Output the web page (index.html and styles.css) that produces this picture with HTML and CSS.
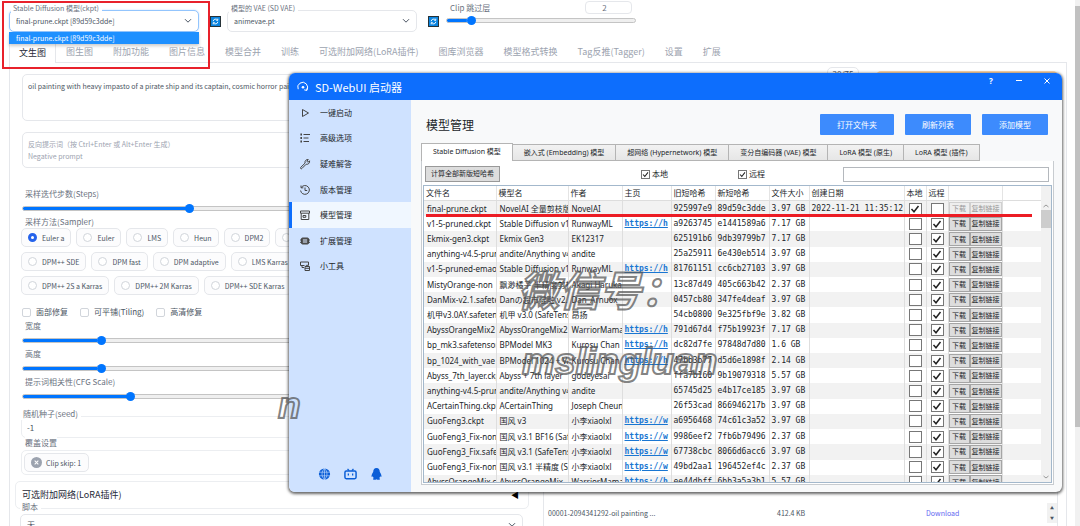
FILE: index.html
```html
<!DOCTYPE html>
<html lang="zh-CN">
<head>
<meta charset="utf-8">
<title>Stable Diffusion</title>
<link rel="stylesheet" href="styles.css">
</head>
<body>
<div class="page">
  <header class="topbar">
    <div class="field field-model">
      <label for="ckpt">Stable Diffusion 模型(ckpt)</label>
      <div class="select-box focused">
        <select id="ckpt"><option>final-prune.ckpt [89d59c3dde]</option></select>
        <svg class="chevron" viewBox="0 0 8 6"><path d="M1 1.2l3 3 3-3"/></svg>
      </div>
      <ul class="options"><li>final-prune.ckpt [89d59c3dde]</li></ul>
    </div>
    <button class="refresh" aria-label="刷新模型"><svg viewBox="0 0 11 11"><rect width="11" height="11" fill="#263238"/><rect x="1" y="1" width="9" height="9" fill="#0a84e0"/><path d="M3.2 5.2a2.4 2.4 0 0 1 4.3-1.2M7.8 5.8a2.4 2.4 0 0 1-4.3 1.2M7.8 2.6v1.7H6.2M3.2 8.4V6.7h1.6" fill="none" stroke="#fff" stroke-width=".9"/></svg></button>
    <div class="field field-model">
      <label for="vae">模型的 VAE (SD VAE)</label>
      <div class="select-box">
        <select id="vae"><option>animevae.pt</option></select>
        <svg class="chevron" viewBox="0 0 8 6"><path d="M1 1.2l3 3 3-3"/></svg>
      </div>
    </div>
    <button class="refresh" aria-label="刷新 VAE"><svg viewBox="0 0 11 11"><rect width="11" height="11" fill="#263238"/><rect x="1" y="1" width="9" height="9" fill="#0a84e0"/><path d="M3.2 5.2a2.4 2.4 0 0 1 4.3-1.2M7.8 5.8a2.4 2.4 0 0 1-4.3 1.2M7.8 2.6v1.7H6.2M3.2 8.4V6.7h1.6" fill="none" stroke="#fff" stroke-width=".9"/></svg></button>
    <div class="clip">
      <div class="clip-head">
        <label for="clip">Clip 跳过层</label>
        <input class="clip-num" type="text" value="2" aria-label="Clip 跳过层">
      </div>
      <input class="slider" id="clip" type="range" min="0" max="100" value="11" style="--fill:11%">
    </div>
  </header>

  <nav class="tabs">
    <button class="tab active">文生图</button>
    <button class="tab">图生图</button>
    <button class="tab">附加功能</button>
    <button class="tab">图片信息</button>
    <button class="tab">模型合并</button>
    <button class="tab">训练</button>
    <button class="tab">可选附加网络(LoRA插件)</button>
    <button class="tab">图库浏览器</button>
    <button class="tab">模型格式转换</button>
    <button class="tab">Tag反推(Tagger)</button>
    <button class="tab">设置</button>
    <button class="tab">扩展</button>
  </nav>

  <main class="panel">
    <div class="prompt-row">
      <div class="prompts">
        <textarea class="prompt" aria-label="提示词">oil painting with heavy impasto of a pirate ship and its captain, cosmic horror painting</textarea>
        <textarea class="prompt negative" aria-label="反向提示词" placeholder="反向提示词（按 Ctrl+Enter 或 Alt+Enter 生成）&#10;Negative prompt"></textarea>
      </div>
      <span class="counter">20/75</span>
      <div class="generate"></div>
    </div>

    <div class="columns">
      <section class="settings">
        <label class="cap" for="steps">采样迭代步数(Steps)</label>
        <input class="slider" id="steps" type="range" min="0" max="100" value="33" style="--fill:33%">
        <span class="cap">采样方法(Sampler)</span>
        <div class="samplers">
          <div class="sampler-row">
            <label><input type="radio" name="s" checked>Euler a</label>
            <label><input type="radio" name="s">Euler</label>
            <label><input type="radio" name="s">LMS</label>
            <label><input type="radio" name="s">Heun</label>
            <label><input type="radio" name="s">DPM2</label>
            <label><input type="radio" name="s">DPM2 a</label>
          </div>
          <div class="sampler-row">
            <label><input type="radio" name="s">DPM++ SDE</label>
            <label><input type="radio" name="s">DPM fast</label>
            <label><input type="radio" name="s">DPM adaptive</label>
            <label><input type="radio" name="s">LMS Karras</label>
          </div>
          <div class="sampler-row">
            <label><input type="radio" name="s">DPM++ 2S a Karras</label>
            <label><input type="radio" name="s">DPM++ 2M Karras</label>
            <label><input type="radio" name="s">DPM++ SDE Karras</label>
          </div>
        </div>
        <div class="checks">
          <label><input type="checkbox">面部修复</label>
          <label><input type="checkbox">可平铺(Tiling)</label>
          <label><input type="checkbox">高清修复</label>
        </div>
        <label class="cap" for="w">宽度</label>
        <input class="slider" id="w" type="range" min="0" max="100" value="15" style="--fill:15%">
        <label class="cap" for="h">高度</label>
        <input class="slider" id="h" type="range" min="0" max="100" value="15" style="--fill:15%">
        <label class="cap" for="cfg">提示词相关性(CFG Scale)</label>
        <input class="slider" id="cfg" type="range" min="0" max="100" value="21" style="--fill:21%">
        <div class="field seed">
          <label for="seed">随机种子(seed)</label>
          <input id="seed" class="text-box" type="text" value="-1">
        </div>
        <span class="cap override">覆盖设置</span>
        <div class="chips"><span class="chip"><svg viewBox="0 0 12 12"><circle cx="6" cy="6" r="6" fill="#9ca3af"/><path d="M4 4l4 4M8 4l-4 4" stroke="#fff" stroke-width="1.1"/></svg>Clip skip: 1</span></div>
        <button class="accordion">可选附加网络(LoRA插件)<span>◀</span></button>
        <div class="field script">
          <label for="script">脚本</label>
          <div class="select-box">
            <select id="script"><option>无</option></select>
            <svg class="chevron" viewBox="0 0 8 6"><path d="M1 1.2l3 3 3-3"/></svg>
          </div>
        </div>
      </section>
      <section class="output">
        <div class="file-row">
          <span class="file-name">00001-2094341292-oil painting ...</span>
          <span class="file-size">412.4 KB</span>
          <a href="#">Download</a>
          <span class="spin"><i>▲</i><i>▼</i></span>
        </div>
      </section>
    </div>
  </main>
</div>
<div class="page-scroll"><div></div></div>

<div class="window">
  <div class="titlebar">
    <svg class="logo" viewBox="0 0 12 12"><path d="M1.2 8.2A4.9 4.9 0 1 1 9.6 9.2M7.2 8.8l2.6.7.7-2.5" fill="none" stroke="#fff" stroke-width="1"/><circle cx="6" cy="6.2" r="1.3" fill="#fff"/></svg>
    <h1>SD-WebUI 启动器</h1>
    <div class="win-buttons">
      <button aria-label="帮助">?</button>
      <button aria-label="最小化"><svg viewBox="0 0 8 8"><path d="M1 3.5h6"/></svg></button>
      <button aria-label="关闭"><svg viewBox="0 0 8 8"><path d="M1.5 1.5l5 5M6.5 1.5l-5 5"/></svg></button>
    </div>
  </div>
  <div class="win-body">
    <aside class="side">
      <nav class="side-nav">
        <a href="#"><svg viewBox="0 0 12 12"><path d="M3.5 2.5v7l6-3.5z"/></svg>一键启动</a>
        <a href="#"><svg viewBox="0 0 12 12"><path d="M4.5 2.5H11M4.5 6h5M4.5 9.5H10"/><path d="M2.2 1.5v9" stroke-width="1.6" stroke-dasharray="2 1.5"/></svg>高级选项</a>
        <a href="#"><svg viewBox="0 0 12 12"><path d="M9.3 1.6a2.7 2.7 0 0 0-3.2 3.5L1.7 9.4a.8.8 0 0 0 1.2 1.1l4.3-4.3a2.7 2.7 0 0 0 3.3-3.4L9 4.3 7.8 3.1z"/></svg>疑难解答</a>
        <a href="#"><svg viewBox="0 0 12 12"><path d="M2.3 3.5a4.4 4.4 0 1 1-.7 3M2 1.5v2.3h2.3M6 3.5V6.500h2.200"/></svg>版本管理</a>
        <a href="#" class="current"><svg viewBox="0 0 12 12"><path d="M1.5 2h9v2.200h-9zM2.200 4.200V10.500h7.600V4.200M4 6.500h2.800v1.800H4z"/></svg>模型管理</a>
        <a href="#"><svg viewBox="0 0 12 12"><rect x="2.500" y="3" width="7" height="6" rx="1" fill="#555"/><path d="M4 5h4M4 7h4" stroke="#dbe8ff"/><path d="M1.500 4.500v1M1.500 6.800v1M10.500 4.500v1M10.500 6.800v1"/></svg>扩展管理</a>
        <a href="#"><svg viewBox="0 0 12 12"><path d="M5 7.500H3V6M1.500 2h8v3M1.500 2v3.500h4M6 6.500h4.500v4H6zM7.300 6.500V5.300h2v1.200M6 8.300h4.500"/></svg>小工具</a>
      </nav>
      <div class="side-foot">
        <svg viewBox="0 0 12 12"><circle cx="6" cy="6" r="5.600" fill="#0b5ed7"/><path d="M.5 4.200h11M.5 7.800h11M6 .4v11.200M6 .4c-3.300 3-3.300 8.200 0 11.200M6 .4c3.300 3 3.300 8.200 0 11.200" fill="none" stroke="#cfe2ff" stroke-width=".6"/></svg>
        <svg viewBox="0 0 14 12"><rect x="1" y="2.800" width="12" height="8.200" rx="1.500" fill="none" stroke="#0b5ed7" stroke-width="1.600"/><path d="M3.800.4l1.700 2M10.200.4l-1.700 2M4.700 5.500v2M9.300 5.500v2" stroke="#0b5ed7" stroke-width="1.400" fill="none"/></svg>
        <svg viewBox="0 0 12 12"><path d="M6 0C3.600 0 2.700 1.800 2.700 4 1.800 5.500.9 7 1 8.400c.1.900.8.300 1.200-.2.200.8.600 1.400 1.100 1.900-.7.300-1 .8-.6 1.300.6.700 2.600.5 3.300-.1.700.6 2.700.8 3.300.1.400-.5.100-1-.6-1.300.5-.5.900-1.100 1.100-1.900.4.500 1.100 1.100 1.200.2C11.100 7 10.200 5.500 9.300 4 9.300 1.800 8.400 0 6 0z" fill="#0b5ed7"/></svg>
      </div>
    </aside>
    <section class="content">
      <div class="content-head">
        <h2>模型管理</h2>
        <button class="primary wide">打开文件夹</button>
        <button class="primary">刷新列表</button>
        <button class="primary">添加模型</button>
      </div>
      <div class="model-tabs">
        <button class="on">Stable Diffusion 模型</button>
        <button>嵌入式 (Embedding) 模型</button>
        <button>超网络 (Hypernetwork) 模型</button>
        <button>变分自编码器 (VAE) 模型</button>
        <button>LoRA 模型 (原生)</button>
        <button>LoRA 模型 (插件)</button>
      </div>
      <div class="model-panel">
        <div class="tools">
          <button class="hash">计算全部新版短哈希</button>
          <label><input class="tick" type="checkbox" checked>本地</label>
          <label><input class="tick" type="checkbox" checked>远程</label>
          <input class="search" type="text" aria-label="搜索">
        </div>
        <div class="grid-frame">
          <table class="models">
            <colgroup><col class="c72"><col class="c72"><col class="c54"><col class="c49"><col class="c44"><col class="c54"><col class="c40"><col class="c95"><col class="c22"><col class="c22"><col class="c54"><col></colgroup>
            <thead><tr><th>文件名</th><th>模型名</th><th>作者</th><th>主页</th><th>旧短哈希</th><th>新短哈希</th><th>文件大小</th><th>创建日期</th><th>本地</th><th>远程</th><th></th><th></th></tr></thead>
            <tbody id="rows"></tbody>
          </table>
          <div class="grid-scroll"><svg viewBox="0 0 8 6"><path d="M1.500 4l2.500-2 2.500 2"/></svg><div></div><svg viewBox="0 0 8 6"><path d="M1.500 2l2.500 2 2.500-2"/></svg></div>
        </div>
      </div>
    </section>
  </div>
</div>

<div class="mark-box"></div>
<div class="mark-line"></div>
<div class="wm wm-title">微信号：</div>
<div class="wm wm-id">mslingluan</div>
<div class="wm wm-tail">n</div>
<script src="script.js"></script>
</body>
</html>
```
FILE: styles.css
```css
* { box-sizing: border-box; }
body {
  margin: 0;
  height: 100vh;
  overflow: hidden;
  display: flex;
  position: relative;
  background: #fff;
  color: #4b5563;
  font: 8px/12px "Noto Sans CJK SC", sans-serif;
}
button, input, select, textarea { font: inherit; color: inherit; margin: 0; padding: 0; }
button { border: 0; background: none; white-space: nowrap; }
h1, h2, ul { margin: 0; padding: 0; list-style: none; }
a { text-decoration: none; }
svg { display: block; flex: none; }

.page { flex: 1; min-width: 0; padding: 0 8px 0 9px; display: flex; flex-direction: column; overflow: hidden; }
.page-scroll { width: 5px; background: #f1f1f1; padding-top: 6px; }
.page-scroll div { height: 81%; background: #c1c1c1; }

.topbar { display: flex; flex: none; height: 39px; }
.field { position: relative; }
.field > label {
  position: relative; z-index: 1; display: block; width: max-content;
  margin: 0 0 -4px 2px; padding: 0 3px 0 2px; background: #fff;
  line-height: 12px; color: #6b7280;
}
.field-model { width: 190px; padding-top: 2px; font-size: 7px; }
.select-box {
  display: flex; align-items: center; height: 22px;
  border: 1px solid #e5e7eb; border-radius: 5px; padding: 0 6px; background: #fff;
}
.select-box.focused { border-color: #93c5fd; box-shadow: 0 0 2px #bfdbfe; }
.select-box select { flex: 1; border: 0; background: none; appearance: none; outline: 0; }
.chevron { width: 8px; height: 6px; fill: none; stroke: #4b5563; stroke-width: 1; }
.options {
  position: absolute; z-index: 3; left: 0; right: 0; top: 32px;
  background: #1e90ff; color: #fff; box-shadow: 0 2px 3px #0003;
}
.options li { padding: 0 7px; }
.refresh { width: 28px; padding: 10px 0 0 5px; display: flex; justify-content: center; align-items: center; height: 32px; }
.refresh svg { width: 11px; height: 11px; }
.clip { width: 190px; margin-left: 1px; }
.clip-head { display: flex; justify-content: space-between; padding: 1px 4px 0; height: 16px; color: #6b7280; }
.clip-head label { padding-top: 1px; }
.clip-num { width: 47px; height: 13px; border: 1px solid #e5e7eb; border-radius: 4px; text-align: center; padding-right: 8px; }

.slider {
  appearance: none; display: block; width: 100%; height: 9px; background: none;
}
.slider::-webkit-slider-runnable-track {
  height: 5px; border: 1px solid #c4c4c4; border-radius: 3px;
  background: linear-gradient(#0075ff, #0075ff) 0 0 / var(--fill) 100% no-repeat border-box, #efefef;
}
.slider::-webkit-slider-thumb {
  appearance: none; width: 9px; height: 9px; margin-top: -3px; border-radius: 50%; background: #0075ff;
}

.tabs { display: flex; flex: none; height: 24px; border-bottom: 1px solid #e5e7eb; }
.tab { padding: 0 10px; font-size: 9px; line-height: 26px; color: #9ca3af; }
.tab.active { color: #1f2937; border: 1px solid #e5e7eb; border-bottom: 0; border-radius: 4px 4px 0 0; padding: 0 9px; height: 24px; background: #fff; line-height: 25px; }

.panel { flex: 1; min-height: 0; overflow: hidden; border: solid #e5e7eb; border-width: 0 1px; padding: 11px 8px 0 5px; }
.prompt-row { display: flex; padding-left: 7px; }
.prompts { flex: 1; display: flex; flex-direction: column; gap: 11px; }
.prompt {
  display: block; width: 100%; height: 47px; resize: none; padding: 5px;
  border: 1px solid #e5e7eb; border-radius: 5px; font-size: 7px; line-height: 12px; background: #fff;
}
.prompt.negative { height: 36px; }
.prompt::placeholder { color: #9ca3af; }
.counter { margin: -7px 17px 0 -40px; width: 32px; height: 16px; border: 1px solid #e5e7eb; border-radius: 5px; text-align: center; background: #fff; }
.generate { width: 182px; height: 30px; margin-top: -3px; border-radius: 5px; background: #fed7aa; }

.columns { display: flex; justify-content: space-between; gap: 14px; padding-top: 19px; }
.settings { flex: 1; min-width: 0; max-width: 514px; padding-right: 6px; }
.cap { display: block; width: max-content; margin-left: 10px; line-height: 13px; color: #6b7280; }
.settings .slider { margin: 4px 0 2px 7px; width: calc(100% - 7px); }
.samplers { display: flex; flex-direction: column; gap: 5px; padding: 0 0 0 6px; }
.sampler-row { display: flex; gap: 5px; }
.sampler-row label {
  display: flex; align-items: center; gap: 5px; height: 19px; padding: 0 6px;
  border: 1px solid #e5e7eb; border-radius: 5px; font-size: 7px; white-space: nowrap; background: #fcfcfd;
}
.sampler-row input { appearance: none; width: 9px; height: 9px; border: 1px solid #d1d5db; border-radius: 50%; background: #fff; }
.sampler-row input:checked { border: 3px solid #2563eb; }
.checks { display: flex; gap: 12px; padding: 11px 0 1px 7px; }
.checks label { display: flex; align-items: center; gap: 5px; }
.checks input { appearance: none; width: 9px; height: 9px; border: 1px solid #d1d5db; border-radius: 2px; }
.seed { margin: 7px 0 0 6px; }
.text-box { display: block; width: 100%; height: 22px; border: 1px solid #eceef1; border-radius: 5px; padding: 0 5px; background: #fff; }
.seed > label, .script > label { margin-left: 0; }
.override { position: relative; margin-top: -2px; background: #fff; }
.chips { margin: 1px 0 0 6px; height: 25px; padding: 2px; border: 1px solid #eceef1; border-radius: 5px; }
.chip { display: flex; align-items: center; gap: 4px; width: max-content; height: 19px; padding: 0 7px 0 6px; border: 1px solid #e5e7eb; border-radius: 5px; font-size: 7px; background: #fcfcfd; }
.chip svg { width: 11px; height: 11px; }
.accordion {
  display: flex; justify-content: space-between; align-items: center; margin-top: 6px;
  width: calc(100% + 6px); height: 28px; padding: 0 9px 0 6px;
  border: 1px solid #eceef1; border-radius: 5px; font-size: 9px; color: #1f2937;
}
.accordion span { color: #000; font-size: 8px; }
.script { margin: -8px 0 0 5px; }
.script > label { margin-bottom: 1px; }
.output { width: 515px; padding-top: 316px; border: solid #e5e7eb; border-width: 0 1px; }
.file-row { display: flex; align-items: center; padding-left: 4px; font-size: 7px; }
.file-name { width: 229px; }
.file-size { width: 149px; }
.file-row a { color: #6366f1; }
.spin { margin-left: auto; width: 10px; height: 20px; background: #f1f1f1; display: grid; place-items: center; font-size: 4px; line-height: 8px; }
.spin i { font-style: normal; }

.window {
  position: absolute; left: 289px; right: 18px; top: 73px; bottom: 34px;
  display: flex; flex-direction: column; overflow: hidden;
  border-radius: 6px; background: #f8f9fa; color: #212529;
  box-shadow: 0 1px 3px 1px #0009;
}
.titlebar { display: flex; height: 27px; padding: 0 10px 0 8px; gap: 6px; align-items: center; background: #0d6efd; color: #fff; }
.logo { width: 12px; height: 12px; }
.titlebar h1 { flex: 1; font: 11px/24px "Noto Sans CJK SC", sans-serif; }
.win-buttons { display: flex; gap: 18px; align-self: flex-start; padding-top: 3px; }
.win-buttons button { width: 10px; height: 10px; font: bold 8px/10px "Noto Sans", sans-serif; }
.win-buttons svg { width: 8px; height: 8px; margin: 1px; fill: none; stroke: #fff; }
.win-body { flex: 1; display: flex; min-height: 0; }
.side { width: 122px; background: #cfe2ff; display: flex; flex-direction: column; justify-content: space-between; }
.side-nav { height: 179px; display: flex; flex-direction: column; }
.side-nav a { flex: 1; display: flex; align-items: center; gap: 9px; padding-left: 10px; color: inherit; }
.side-nav svg { width: 12px; height: 12px; fill: none; stroke: #444; stroke-width: 1; }
.side-nav .current { background: #f0f7ff; border-left: 3px solid #0d6efd; padding-left: 7px; }
.side-foot { display: flex; gap: 13px; padding: 0 0 12px 29px; }
.side-foot svg { width: 13px; height: 12px; }

.content { flex: 1; min-width: 0; display: flex; flex-direction: column; padding: 14px 8px 7px 10px; font-family: "Noto Sans", "Noto Sans CJK SC", sans-serif; }
.content-head { display: flex; gap: 11px; padding: 0 6px 8px 5px; align-items: center; }
.content-head h2 { flex: 1; font: 12px/21px "Noto Sans CJK SC", sans-serif; }
.primary { width: 66px; height: 21px; background: #3d8bfd; color: #fff; border-radius: 1px; }
.primary.wide { width: 74px; }
.model-tabs { display: flex; align-items: flex-end; height: 18px; }
.model-tabs button { height: 17px; padding: 0 11px; border: 1px solid #b4b4b4; border-left: 0; background: linear-gradient(#f2f2f2, #e6e6e6); font-size: 7px; }
.model-tabs .on { height: 18px; padding-bottom: 1px; border-left: 1px solid #b4b4b4; border-bottom: 0; background: #fff; }
.model-panel { flex: 1; min-height: 0; display: flex; flex-direction: column; border: 1px solid #c8ccd0; border-top: 0; padding: 5px 1px 1px; background: #fff; }
.tools { display: flex; align-items: center; padding: 0 3px 3px 2px; }
.hash { width: 75px; height: 16px; border: 1px solid #999; background: #ddd; font-size: 7px; line-height: 12px; }
.tools label { display: flex; align-items: center; gap: 2px; margin-left: 70px; }
.tools label:first-of-type { margin-left: 141px; }
.tick { appearance: none; width: 9px; height: 9px; border: 1px solid #777; background: #fff; }
.tick:checked { background: #fff url("data:image/svg+xml,%3Csvg xmlns='http://www.w3.org/2000/svg' viewBox='0 0 10 10'%3E%3Cpath d='M1.500 5l2.500 2.800L8.500 2' fill='none' stroke='%23222' stroke-width='1.500'/%3E%3C/svg%3E") center / contain no-repeat; }
.search { width: 206px; height: 15px; margin-left: auto; border: 1px solid #b4b8bd; background: #fff; }
.grid-frame { flex: 1; min-height: 0; display: flex; overflow: hidden; border: 1px solid #a3b8cc; }
.models { flex: 1; width: 1px; height: 304px; table-layout: fixed; border-collapse: collapse; }
.c72 { width: 72px; } .c54 { width: 54px; } .c49 { width: 49px; } .c44 { width: 44px; }
.c40 { width: 40px; } .c95 { width: 95px; } .c22 { width: 22px; }
.models th { padding: 0 0 0 2px; font: 8px/14px "Noto Sans CJK SC", sans-serif; text-align: left; white-space: nowrap; border-right: 1px solid #e4e4e4; border-bottom: 1px solid #ddd; }
.models td { padding: 0 0 0 3px; line-height: 14px; white-space: nowrap; overflow: hidden; border-right: 1px solid #dedede; }
.models td:last-child, .models th:last-child { border-right: 0; }
.models tbody tr:nth-child(odd) { background: #f2f2f2; }
.models tbody tr:first-child td:last-child { background: #fff; }
.models .mono { font-family: "DejaVu Sans Mono", monospace; padding-left: 2px; }
.models .mono a { color: #1976d2; font-weight: bold; text-decoration: underline; }
.models .box { padding: 0; }
.models .tick { display: block; width: 13px; height: 12px; margin: 0 auto; }
.models .acts { padding: 0; }
.acts div { display: flex; }
.acts button { height: 14px; border: 1px solid #a5a5a5; background: #ddd; font-size: 7px; line-height: 11px; width: 21px; overflow: hidden; }
.acts button + button { width: 32px; }
.acts button:disabled { color: #999; background: #eee; border-color: #d0d0d0; }
.grid-scroll { width: 10px; background: #f1f1f1; display: flex; flex-direction: column; align-items: center; padding: 17px 0 2px; }
.grid-scroll svg { width: 8px; height: 6px; fill: none; stroke: #999; }
.grid-scroll div { width: 100%; height: 18px; margin: 1px 0 auto; background: #cdcdcd; }

.mark-box { position: absolute; left: 2px; top: 1px; width: 208px; height: 68px; border: 2px solid #e8212b; z-index: 5; }
.mark-line { position: absolute; left: 426px; right: 48px; top: 214px; height: 3px; background: #ec1c24; }
.wm { position: absolute; white-space: nowrap; color: transparent; -webkit-text-stroke: 2px #555b; pointer-events: none; }
.wm-title { left: 518px; top: 260px; font: italic bold 41px/56px "Noto Sans CJK SC", sans-serif; }
.wm-id { left: 522px; top: 332px; font: italic bold 37px/60px "Liberation Sans", sans-serif; }
.wm-tail { left: 278px; top: 376px; font: italic bold 37px/60px "Liberation Sans", sans-serif; }
```
FILE: script.js
```js
const models = [
  ["final-prune.ckpt", "NovelAI 全量剪枝版", "NovelAI", "", "925997e9", "89d59c3dde", "3.97 GB", "2022-11-21 11:35:12"],
  ["v1-5-pruned.ckpt", "Stable Diffusion v1.5", "RunwayML", "https://h", "a9263745", "e1441589a6", "7.17 GB"],
  ["Ekmix-gen3.ckpt", "Ekmix Gen3", "EK12317", "", "625191b6", "9db39799b7", "7.17 GB"],
  ["anything-v4.5-pruned", "andite/Anything v4.5", "andite", "", "25a25911", "6e430eb514", "3.97 GB"],
  ["v1-5-pruned-emaonly", "Stable Diffusion v1.5", "RunwayML", "https://h", "81761151", "cc6cb27103", "3.97 GB"],
  ["MistyOrange-non", "飘渺橘子 半精度剪枝", "Akagi Haruka", "", "13c87d49", "405c663b42", "2.37 GB"],
  ["DanMix-v2.1.safetensors", "Danの超市混融 v2.1", "Dan_Arnuox", "", "0457cb80", "347fe4deaf", "3.97 GB"],
  ["机甲v3.0AY.safetensors", "机甲 v3.0 (SafeTensors)", "昂扬", "", "54cb0800", "9e325fbf9e", "3.82 GB"],
  ["AbyssOrangeMix2", "AbyssOrangeMix2", "WarriorMama777", "https://h", "791d67d4", "f75b19923f", "7.17 GB"],
  ["bp_mk3.safetensors", "BPModel MK3", "Kurosu Chan", "https://h", "dc82d7fe", "97848d7d80", "1.6 GB"],
  ["bp_1024_with_vae", "BPModel 1024 + VAE", "Kurosu Chan", "https://h", "47bb3b77", "d5d6e1898f", "2.14 GB"],
  ["Abyss_7th_layer.ckpt", "Abyss + 7th layer", "godeyesai", "", "ffa7b160", "9b19079318", "5.57 GB"],
  ["anything-v4.5-pruned", "andite/Anything v4.5", "andite", "", "65745d25", "e4b17ce185", "3.97 GB"],
  ["ACertainThing.ckpt", "ACertainThing", "Joseph Cheung", "", "26f53cad", "866946217b", "3.97 GB"],
  ["GuoFeng3.ckpt", "国风 v3", "小李xiaolxl", "https://w", "a6956468", "74c61c3a52", "3.97 GB"],
  ["GuoFeng3_Fix-non", "国风 v3.1 BF16 (SafeTensors)", "小李xiaolxl", "https://w", "9986eef2", "7fb6b79496", "2.37 GB"],
  ["GuoFeng3_Fix.safetensors", "国风 v3.1 (SafeTensors)", "小李xiaolxl", "https://w", "67738cbc", "8066d6acc6", "3.97 GB"],
  ["GuoFeng3_Fix-non", "国风 v3.1 半精度 (SafeTensors)", "小李xiaolxl", "https://w", "49bd2aa1", "196452ef4c", "2.37 GB"],
  ["AbyssOrangeMix.ckpt", "AbyssOrangeMix", "WarriorMama777", "https://h", "ee44dbff", "6bb3a5a3b1", "5.57 GB"]
];

document.getElementById("rows").innerHTML = models.map((m, i) => {
  const local = i === 0;
  const off = local ? " disabled" : "";
  const tick = (on, name) => `<td class="box"><input class="tick" type="checkbox" aria-label="${name}"${on ? " checked" : ""}></td>`;
  return `<tr><td>${m[0]}</td><td>${m[1]}</td><td>${m[2]}</td>` +
    `<td class="mono">${m[3] ? `<a href="#">${m[3]}</a>` : ""}</td>` +
    `<td class="mono">${m[4]}</td><td class="mono">${m[5]}</td><td class="mono">${m[6]}</td><td class="mono">${m[7] || ""}</td>` +
    tick(local, "本地") + tick(!local, "远程") +
    `<td class="acts"><div><button${off}>下载</button><button${off}>复制链接</button></div></td><td></td></tr>`;
}).join("");
```
